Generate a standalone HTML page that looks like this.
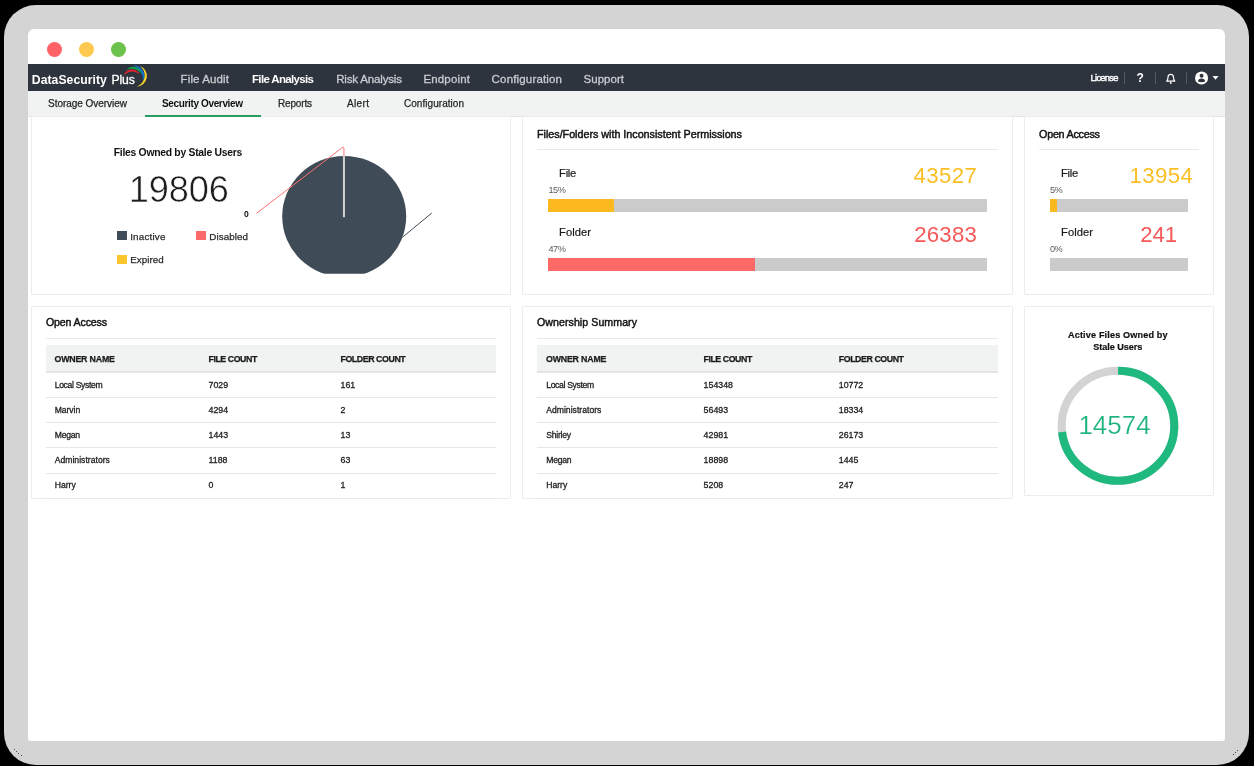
<!DOCTYPE html>
<html><head><meta charset="utf-8"><title>DataSecurity Plus</title>
<style>
html,body{margin:0;padding:0;}
body{width:1254px;height:766px;background:#000;position:relative;overflow:hidden;font-family:"Liberation Sans",sans-serif;}
.abs{position:absolute;}
.t{position:absolute;white-space:nowrap;line-height:normal;font-family:"Liberation Sans",sans-serif;}
.frame{position:absolute;left:4px;top:4.9px;width:1245px;height:760.1px;background:#d4d4d4;border-radius:32px;}
.win{position:absolute;left:28px;top:29px;width:1197px;height:711.8px;background:#fff;border-radius:6px 6px 3px 3px;overflow:hidden;}
.dot{position:absolute;width:15px;height:15px;border-radius:50%;top:42px;}
.nav{position:absolute;left:28px;top:64px;width:1197px;height:27px;background:#2e343d;}
.sub{position:absolute;left:28px;top:91px;width:1197px;height:25px;background:#f1f3f2;border-bottom:1px solid #e2e4e3;}
.card{position:absolute;box-sizing:border-box;border:1px solid #ebedec;background:#fff;border-radius:1px;}
.hr{position:absolute;height:1px;background:#e9ebea;}
.bar{position:absolute;height:12.6px;background:#cbcbcb;}
.bar i{display:block;height:12.6px;}
.th{position:absolute;height:25.5px;background:#f1f3f2;border-bottom:2px solid #e3e5e4;box-sizing:content-box;}
.rl{position:absolute;height:1px;background:#e6e8e7;}
.sq{position:absolute;width:9.8px;height:9.7px;}
.layer{position:absolute;left:0;top:0;width:1254px;height:766px;will-change:transform;}
.pd{position:absolute;width:1.3px;height:1.3px;background:#1a1a1a;border-radius:50%;}

</style></head>
<body>
<div class="layer">
<div class="frame"></div>
<div class="win"></div>
<div class="pd" style="left:13.85px;top:748.75px;"></div>
<div class="pd" style="left:15.65px;top:750.95px;"></div>
<div class="pd" style="left:17.85px;top:752.85px;"></div>
<div class="pd" style="left:20.85px;top:754.85px;"></div>
<div class="pd" style="left:1232.75px;top:753.85px;"></div>
<div class="pd" style="left:1234.85px;top:751.85px;"></div>
<div class="pd" style="left:1236.85px;top:749.75px;"></div>
<div class="dot" style="left:47px;background:#fe6267;"></div>
<div class="dot" style="left:79px;background:#fec94e;"></div>
<div class="dot" style="left:111px;background:#6dc24b;"></div>
<div class="nav"></div>
<div class="sub"></div>

<!-- logo arcs -->
<svg class="abs" style="left:118px;top:62px;" width="34" height="30" viewBox="118 62 34 30">
  <path d="M139.90 66.00 A10.63 10.63 0 0 1 136.60 86.60 A11.79 11.79 0 0 0 139.90 66.00 Z" fill="#f8d72b"/>
  <path d="M133.30 65.60 A10.13 10.13 0 0 1 143.10 80.60 A15.73 15.73 0 0 0 133.30 65.60 Z" fill="#1370c9"/>
  <path d="M126.30 70.00 A8.89 8.89 0 0 1 141.90 74.60 A11.93 11.93 0 0 0 126.30 70.00 Z" fill="#12a24a"/>
  <path d="M123.90 75.60 A8.51 8.51 0 0 1 139.60 74.20 A10.83 10.83 0 0 0 123.90 75.60 Z" fill="#e8202e"/>
</svg>

<!-- right nav icons -->
<div class="abs" style="left:1124.4px;top:72px;width:1px;height:11.5px;background:#525b65;"></div>
<div class="abs" style="left:1155.4px;top:72px;width:1px;height:11.5px;background:#525b65;"></div>
<div class="abs" style="left:1186.3px;top:72px;width:1px;height:11.5px;background:#525b65;"></div>
<svg class="abs" style="left:1160px;top:68px;" width="22" height="20" viewBox="1160 68 22 20">
  <path d="M1166.7 81.2 C1167.9 80.2 1168 79 1168 77.3 C1168 75.3 1169.1 74.3 1170.75 74.3 C1172.4 74.3 1173.5 75.3 1173.5 77.3 C1173.5 79 1173.6 80.2 1174.8 81.2 Z" fill="none" stroke="#fff" stroke-width="1.2" stroke-linejoin="round"/>
  <circle cx="1170.75" cy="83" r="0.95" fill="#fff"/>
</svg>
<svg class="abs" style="left:1192px;top:68px;" width="20" height="20" viewBox="1192 68 20 20">
  <circle cx="1201.55" cy="77.95" r="6.55" fill="#fff"/>
  <circle cx="1201.55" cy="75.7" r="1.95" fill="#2d333c"/>
  <path d="M1198 81.6 C1198 79.4 1199.6 78.6 1201.55 78.6 C1203.5 78.6 1205.1 79.4 1205.1 81.6 C1203 82.4 1200.1 82.4 1198 81.6 Z" fill="#2d333c"/>
</svg>
<svg class="abs" style="left:1210px;top:73px;" width="12" height="10" viewBox="1210 73 12 10"><path d="M1212.5 76 L1218.6 76 L1215.55 79.8 Z" fill="#fff"/></svg>

<!-- cards -->
<div class="card" style="left:31px;top:116px;width:480px;height:179px;"></div>
<div class="card" style="left:522px;top:116px;width:491px;height:179px;"></div>
<div class="card" style="left:1024px;top:116px;width:190px;height:179px;"></div>
<div class="card" style="left:31px;top:306px;width:480px;height:193px;"></div>
<div class="card" style="left:522px;top:306px;width:491px;height:193px;"></div>
<div class="card" style="left:1024px;top:306px;width:190px;height:190px;"></div>

<!-- card1: pie -->
<svg class="abs" style="left:230px;top:135px;" width="220" height="150" viewBox="230 135 220 150">
  <defs><clipPath id="pc"><rect x="270" y="140" width="150" height="133.7"/></clipPath></defs>
  <ellipse cx="344.2" cy="216.5" rx="62" ry="60.6" fill="#3f4b56" clip-path="url(#pc)"/>
  <path d="M343.95 217.2 L343.95 155.5" stroke="#d2d2d2" stroke-width="2" fill="none"/>
  <path d="M256.5 213.3 L342.9 147.1 L343.95 148 L343.95 155.8" stroke="#f97373" stroke-width="1" fill="none" stroke-linejoin="round"/>
  <path d="M402.4 237.3 L431.8 213" stroke="#3f4b56" stroke-width="1" fill="none"/>
</svg>
<div class="sq" style="left:117px;top:230.8px;background:#3f4b56;"></div>
<div class="sq" style="left:196px;top:230.8px;background:#fb6a69;"></div>
<div class="sq" style="left:117px;top:254.5px;background:#fcc62f;"></div>

<!-- card2 -->
<div class="hr" style="left:537px;top:149px;width:461px;"></div>
<div class="bar" style="left:548px;top:199px;width:439.3px;"><i style="width:66px;background:#fcb91f;"></i></div>
<div class="bar" style="left:548px;top:258px;width:439.3px;"><i style="width:206.6px;background:#fc6967;"></i></div>

<!-- card3 -->
<div class="hr" style="left:1039px;top:149px;width:160px;"></div>
<div class="bar" style="left:1050px;top:199px;width:138px;"><i style="width:7px;background:#fcb91f;"></i></div>
<div class="bar" style="left:1050px;top:258px;width:138px;"></div>

<!-- card4 table -->
<div class="hr" style="left:46px;top:338px;width:450px;"></div>
<div class="th" style="left:46px;top:345px;width:450px;"></div>
<div class="rl" style="left:46px;top:397px;width:450px;"></div>
<div class="rl" style="left:46px;top:422.2px;width:450px;"></div>
<div class="rl" style="left:46px;top:447.4px;width:450px;"></div>
<div class="rl" style="left:46px;top:472.6px;width:450px;"></div>
<div class="rl" style="left:46px;top:497.8px;width:450px;"></div>

<!-- card5 table -->
<div class="hr" style="left:537px;top:338px;width:461px;"></div>
<div class="th" style="left:537px;top:345px;width:461px;"></div>
<div class="rl" style="left:537px;top:397px;width:461px;"></div>
<div class="rl" style="left:537px;top:422.2px;width:461px;"></div>
<div class="rl" style="left:537px;top:447.4px;width:461px;"></div>
<div class="rl" style="left:537px;top:472.6px;width:461px;"></div>
<div class="rl" style="left:537px;top:497.8px;width:461px;"></div>

<!-- card6 donut -->
<svg class="abs" style="left:1050px;top:360px;" width="136" height="132" viewBox="1050 360 136 132">
  <ellipse cx="1118" cy="425.8" rx="56.3" ry="55.0" fill="none" stroke="#d3d3d3" stroke-width="8.1"/>
  <path d="M1118 370.8 A56.3 55.0 0 1 1 1062.05 431.93" fill="none" stroke="#1fb980" stroke-width="8.1"/>
</svg>
<div class="abs" style="left:144.7px;top:114.5px;width:116.4px;height:2.5px;background:#2a9d63;"></div>

<span class="t" style="left:31.8px;top:73.01px;font-size:12.2px;font-weight:700;color:#ffffff;letter-spacing:0.044px;">DataSecurity</span>
<span class="t" style="left:111.4px;top:73.01px;font-size:12.2px;font-weight:400;color:#ffffff;letter-spacing:-0.106px;-webkit-text-stroke:0.3px #ffffff;">Plus</span>
<span class="t" style="left:180.6px;top:73.01px;font-size:11.5px;font-weight:400;color:#c9ccd1;letter-spacing:0.121px;-webkit-text-stroke:0.3px #c9ccd1;">File Audit</span>
<span class="t" style="left:252px;top:73.01px;font-size:11.5px;font-weight:700;color:#ffffff;letter-spacing:-0.658px;">File Analysis</span>
<span class="t" style="left:336.2px;top:73.01px;font-size:11.5px;font-weight:400;color:#c9ccd1;letter-spacing:-0.162px;-webkit-text-stroke:0.3px #c9ccd1;">Risk Analysis</span>
<span class="t" style="left:423.4px;top:73.01px;font-size:11.5px;font-weight:400;color:#c9ccd1;letter-spacing:0.171px;-webkit-text-stroke:0.3px #c9ccd1;">Endpoint</span>
<span class="t" style="left:491.6px;top:73.01px;font-size:11.5px;font-weight:400;color:#c9ccd1;letter-spacing:0.166px;-webkit-text-stroke:0.3px #c9ccd1;">Configuration</span>
<span class="t" style="left:583.6px;top:73.01px;font-size:11.5px;font-weight:400;color:#c9ccd1;letter-spacing:0.020px;-webkit-text-stroke:0.3px #c9ccd1;">Support</span>
<span class="t" style="left:1090.6px;top:72.01px;font-size:9.4px;font-weight:400;color:#ffffff;letter-spacing:-0.755px;-webkit-text-stroke:0.4px #ffffff;">License</span>
<span class="t" style="left:1136.4px;top:71.01px;font-size:12px;font-weight:700;color:#ffffff;letter-spacing:0.000px;">?</span>
<span class="t" style="left:48px;top:98.01px;font-size:10px;font-weight:400;color:#1f2326;letter-spacing:-0.032px;-webkit-text-stroke:0.25px #1f2326;">Storage Overview</span>
<span class="t" style="left:162px;top:98.01px;font-size:10px;font-weight:700;color:#111;letter-spacing:-0.357px;">Security Overview</span>
<span class="t" style="left:278px;top:98.01px;font-size:10px;font-weight:400;color:#1f2326;letter-spacing:-0.169px;-webkit-text-stroke:0.25px #1f2326;">Reports</span>
<span class="t" style="left:347px;top:98.01px;font-size:10px;font-weight:400;color:#1f2326;letter-spacing:0.359px;-webkit-text-stroke:0.25px #1f2326;">Alert</span>
<span class="t" style="left:404px;top:98.01px;font-size:10px;font-weight:400;color:#1f2326;letter-spacing:0.043px;-webkit-text-stroke:0.25px #1f2326;">Configuration</span>
<span class="t" style="left:113.8px;top:147.01px;font-size:10.4px;font-weight:700;color:#111;letter-spacing:-0.293px;">Files Owned by Stale Users</span>
<span class="t" style="left:128.80000000000004px;top:169.00px;font-size:36.2px;font-weight:400;color:#1c1c1c;letter-spacing:-0.135px;-webkit-text-stroke:0.6px #fff;">19806</span>
<span class="t" style="left:244px;top:209.00px;font-size:8.6px;font-weight:700;color:#111;letter-spacing:0.000px;">0</span>
<span class="t" style="left:130.2px;top:231.02px;font-size:9.8px;font-weight:400;color:#2b2b2b;letter-spacing:0.205px;-webkit-text-stroke:0.25px #2b2b2b;">Inactive</span>
<span class="t" style="left:209.3px;top:231.02px;font-size:9.8px;font-weight:400;color:#2b2b2b;letter-spacing:0.082px;-webkit-text-stroke:0.25px #2b2b2b;">Disabled</span>
<span class="t" style="left:130.2px;top:254.01px;font-size:9.8px;font-weight:400;color:#2b2b2b;letter-spacing:0.064px;-webkit-text-stroke:0.25px #2b2b2b;">Expired</span>
<span class="t" style="left:537px;top:128.00px;font-size:10.8px;font-weight:400;color:#141414;letter-spacing:-0.034px;-webkit-text-stroke:0.45px #141414;">Files/Folders with Inconsistent Permissions</span>
<span class="t" style="left:559.1px;top:167.01px;font-size:11.2px;font-weight:400;color:#1a1a1a;letter-spacing:-0.277px;-webkit-text-stroke:0.2px #1a1a1a;">File</span>
<span class="t" style="left:548.4px;top:185.01px;font-size:9.2px;font-weight:400;color:#5a5a5a;letter-spacing:-0.395px;">15%</span>
<span class="t" style="left:913.5999999999999px;top:163.00px;font-size:22.2px;font-weight:400;color:#fbbf24;letter-spacing:0.374px;">43527</span>
<span class="t" style="left:559.1px;top:226.01px;font-size:11.2px;font-weight:400;color:#1a1a1a;letter-spacing:0.036px;-webkit-text-stroke:0.2px #1a1a1a;">Folder</span>
<span class="t" style="left:548.4px;top:244.01px;font-size:9.2px;font-weight:400;color:#5a5a5a;letter-spacing:-0.395px;">47%</span>
<span class="t" style="left:914.2px;top:222.00px;font-size:22.2px;font-weight:400;color:#f65858;letter-spacing:0.224px;">26383</span>
<span class="t" style="left:1039px;top:128.00px;font-size:10.8px;font-weight:400;color:#141414;letter-spacing:-0.263px;-webkit-text-stroke:0.45px #141414;">Open Access</span>
<span class="t" style="left:1061px;top:167.01px;font-size:11.2px;font-weight:400;color:#1a1a1a;letter-spacing:-0.277px;-webkit-text-stroke:0.2px #1a1a1a;">File</span>
<span class="t" style="left:1049.9px;top:185.01px;font-size:9.2px;font-weight:400;color:#5a5a5a;letter-spacing:-0.381px;">5%</span>
<span class="t" style="left:1129.3999999999996px;top:163.00px;font-size:22.2px;font-weight:400;color:#fbbf24;letter-spacing:0.424px;">13954</span>
<span class="t" style="left:1061px;top:226.01px;font-size:11.2px;font-weight:400;color:#1a1a1a;letter-spacing:0.056px;-webkit-text-stroke:0.2px #1a1a1a;">Folder</span>
<span class="t" style="left:1049.9px;top:244.01px;font-size:9.2px;font-weight:400;color:#5a5a5a;letter-spacing:-0.381px;">0%</span>
<span class="t" style="left:1140.1999999999998px;top:222.00px;font-size:22.2px;font-weight:400;color:#f65858;letter-spacing:-0.016px;">241</span>
<span class="t" style="left:46px;top:316.01px;font-size:10.6px;font-weight:400;color:#141414;letter-spacing:-0.142px;-webkit-text-stroke:0.45px #141414;">Open Access</span>
<span class="t" style="left:54.5px;top:354.01px;font-size:8.8px;font-weight:700;color:#1a1a1a;letter-spacing:-0.186px;-webkit-text-stroke:0.25px #1a1a1a;">OWNER NAME</span>
<span class="t" style="left:208.5px;top:354.01px;font-size:8.8px;font-weight:700;color:#1a1a1a;letter-spacing:-0.442px;-webkit-text-stroke:0.25px #1a1a1a;">FILE COUNT</span>
<span class="t" style="left:340.5px;top:354.01px;font-size:8.8px;font-weight:700;color:#1a1a1a;letter-spacing:-0.426px;-webkit-text-stroke:0.25px #1a1a1a;">FOLDER COUNT</span>
<span class="t" style="left:54.7px;top:380.00px;font-size:8.6px;font-weight:400;color:#1e1e1e;letter-spacing:-0.327px;-webkit-text-stroke:0.3px #1e1e1e;">Local System</span>
<span class="t" style="left:208.5px;top:380.01px;font-size:8.8px;font-weight:400;color:#1e1e1e;letter-spacing:0.000px;-webkit-text-stroke:0.3px #1e1e1e;">7029</span>
<span class="t" style="left:340.5px;top:380.01px;font-size:8.8px;font-weight:400;color:#1e1e1e;letter-spacing:0.000px;-webkit-text-stroke:0.3px #1e1e1e;">161</span>
<span class="t" style="left:54.7px;top:405.01px;font-size:8.6px;font-weight:400;color:#1e1e1e;letter-spacing:-0.059px;-webkit-text-stroke:0.3px #1e1e1e;">Marvin</span>
<span class="t" style="left:208.5px;top:405.00px;font-size:8.8px;font-weight:400;color:#1e1e1e;letter-spacing:0.000px;-webkit-text-stroke:0.3px #1e1e1e;">4294</span>
<span class="t" style="left:340.5px;top:405.00px;font-size:8.8px;font-weight:400;color:#1e1e1e;letter-spacing:0.000px;-webkit-text-stroke:0.3px #1e1e1e;">2</span>
<span class="t" style="left:54.7px;top:430.01px;font-size:8.6px;font-weight:400;color:#1e1e1e;letter-spacing:-0.220px;-webkit-text-stroke:0.3px #1e1e1e;">Megan</span>
<span class="t" style="left:208.5px;top:430.00px;font-size:8.8px;font-weight:400;color:#1e1e1e;letter-spacing:0.000px;-webkit-text-stroke:0.3px #1e1e1e;">1443</span>
<span class="t" style="left:340.5px;top:430.00px;font-size:8.8px;font-weight:400;color:#1e1e1e;letter-spacing:0.000px;-webkit-text-stroke:0.3px #1e1e1e;">13</span>
<span class="t" style="left:54.7px;top:455.00px;font-size:8.6px;font-weight:400;color:#1e1e1e;letter-spacing:0.021px;-webkit-text-stroke:0.3px #1e1e1e;">Administrators</span>
<span class="t" style="left:208.5px;top:455.00px;font-size:8.8px;font-weight:400;color:#1e1e1e;letter-spacing:0.000px;-webkit-text-stroke:0.3px #1e1e1e;">1188</span>
<span class="t" style="left:340.5px;top:455.00px;font-size:8.8px;font-weight:400;color:#1e1e1e;letter-spacing:0.000px;-webkit-text-stroke:0.3px #1e1e1e;">63</span>
<span class="t" style="left:54.7px;top:480.00px;font-size:8.6px;font-weight:400;color:#1e1e1e;letter-spacing:-0.004px;-webkit-text-stroke:0.3px #1e1e1e;">Harry</span>
<span class="t" style="left:208.5px;top:480.01px;font-size:8.8px;font-weight:400;color:#1e1e1e;letter-spacing:0.000px;-webkit-text-stroke:0.3px #1e1e1e;">0</span>
<span class="t" style="left:340.5px;top:480.01px;font-size:8.8px;font-weight:400;color:#1e1e1e;letter-spacing:0.000px;-webkit-text-stroke:0.3px #1e1e1e;">1</span>
<span class="t" style="left:537px;top:316.01px;font-size:10.6px;font-weight:400;color:#141414;letter-spacing:0.068px;-webkit-text-stroke:0.45px #141414;">Ownership Summary</span>
<span class="t" style="left:546px;top:354.01px;font-size:8.8px;font-weight:700;color:#1a1a1a;letter-spacing:-0.186px;-webkit-text-stroke:0.25px #1a1a1a;">OWNER NAME</span>
<span class="t" style="left:703.5px;top:354.01px;font-size:8.8px;font-weight:700;color:#1a1a1a;letter-spacing:-0.442px;-webkit-text-stroke:0.25px #1a1a1a;">FILE COUNT</span>
<span class="t" style="left:838.8px;top:354.01px;font-size:8.8px;font-weight:700;color:#1a1a1a;letter-spacing:-0.426px;-webkit-text-stroke:0.25px #1a1a1a;">FOLDER COUNT</span>
<span class="t" style="left:546.2px;top:380.00px;font-size:8.6px;font-weight:400;color:#1e1e1e;letter-spacing:-0.327px;-webkit-text-stroke:0.3px #1e1e1e;">Local System</span>
<span class="t" style="left:703.6px;top:380.01px;font-size:8.8px;font-weight:400;color:#1e1e1e;letter-spacing:0.000px;-webkit-text-stroke:0.3px #1e1e1e;">154348</span>
<span class="t" style="left:838.8px;top:380.01px;font-size:8.8px;font-weight:400;color:#1e1e1e;letter-spacing:0.000px;-webkit-text-stroke:0.3px #1e1e1e;">10772</span>
<span class="t" style="left:546.2px;top:405.01px;font-size:8.6px;font-weight:400;color:#1e1e1e;letter-spacing:0.021px;-webkit-text-stroke:0.3px #1e1e1e;">Administrators</span>
<span class="t" style="left:703.6px;top:405.00px;font-size:8.8px;font-weight:400;color:#1e1e1e;letter-spacing:0.000px;-webkit-text-stroke:0.3px #1e1e1e;">56493</span>
<span class="t" style="left:838.8px;top:405.00px;font-size:8.8px;font-weight:400;color:#1e1e1e;letter-spacing:0.000px;-webkit-text-stroke:0.3px #1e1e1e;">18334</span>
<span class="t" style="left:546.2px;top:430.01px;font-size:8.6px;font-weight:400;color:#1e1e1e;letter-spacing:-0.214px;-webkit-text-stroke:0.3px #1e1e1e;">Shirley</span>
<span class="t" style="left:703.6px;top:430.00px;font-size:8.8px;font-weight:400;color:#1e1e1e;letter-spacing:0.000px;-webkit-text-stroke:0.3px #1e1e1e;">42981</span>
<span class="t" style="left:838.8px;top:430.00px;font-size:8.8px;font-weight:400;color:#1e1e1e;letter-spacing:0.000px;-webkit-text-stroke:0.3px #1e1e1e;">26173</span>
<span class="t" style="left:546.2px;top:455.00px;font-size:8.6px;font-weight:400;color:#1e1e1e;letter-spacing:-0.220px;-webkit-text-stroke:0.3px #1e1e1e;">Megan</span>
<span class="t" style="left:703.6px;top:455.00px;font-size:8.8px;font-weight:400;color:#1e1e1e;letter-spacing:0.000px;-webkit-text-stroke:0.3px #1e1e1e;">18898</span>
<span class="t" style="left:838.8px;top:455.00px;font-size:8.8px;font-weight:400;color:#1e1e1e;letter-spacing:0.000px;-webkit-text-stroke:0.3px #1e1e1e;">1445</span>
<span class="t" style="left:546.2px;top:480.00px;font-size:8.6px;font-weight:400;color:#1e1e1e;letter-spacing:-0.004px;-webkit-text-stroke:0.3px #1e1e1e;">Harry</span>
<span class="t" style="left:703.6px;top:480.01px;font-size:8.8px;font-weight:400;color:#1e1e1e;letter-spacing:0.000px;-webkit-text-stroke:0.3px #1e1e1e;">5208</span>
<span class="t" style="left:838.8px;top:480.01px;font-size:8.8px;font-weight:400;color:#1e1e1e;letter-spacing:0.000px;-webkit-text-stroke:0.3px #1e1e1e;">247</span>
<span class="t" style="left:1068px;top:330.02px;font-size:9.1px;font-weight:700;color:#111;letter-spacing:0.153px;-webkit-text-stroke:0.2px #111;">Active Files Owned by</span>
<span class="t" style="left:1093.2px;top:342.01px;font-size:9.1px;font-weight:700;color:#111;letter-spacing:-0.035px;-webkit-text-stroke:0.2px #111;">Stale Users</span>
<span class="t" style="left:1078.3999999999996px;top:411.00px;font-size:25.9px;font-weight:400;color:#1db37c;letter-spacing:0.050px;-webkit-text-stroke:0.2px #fff;">14574</span>
</div>
</body></html>
